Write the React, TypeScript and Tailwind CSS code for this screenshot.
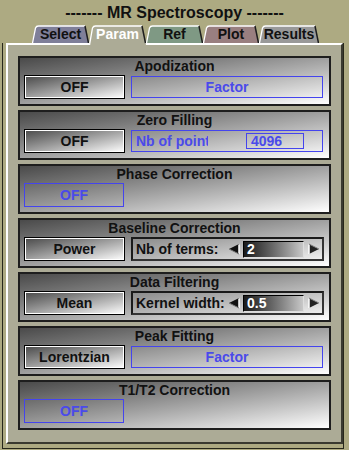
import type { ReactNode } from 'react'

const tabs = [
  { label: 'Select', w: 57, fill: '#7f7f99', text: 'text-[#111]' },
  { label: 'Param', w: 57, fill: '#acab96', text: 'text-white', active: true },
  { label: 'Ref', w: 57, fill: '#7f9984', text: 'text-[#111]' },
  { label: 'Plot', w: 56, fill: '#997f80', text: 'text-[#111]' },
  { label: 'Results', w: 60, fill: '#999999', text: 'text-[#111]' },
]

function Tab({ label, w, fill, text, active }: { label: string; w: number; fill: string; text: string; active?: boolean }) {
  const h = active ? 20 : 18
  return (
    <div className={`relative flex items-center justify-center ${active ? 'z-10 h-[20px] -mb-[2px] pb-[2px]' : 'h-[18px]'}`} style={{ width: w }}>
      <svg className="absolute inset-0" width={w} height={h}>
        <path d={`M0 ${h} L3 3 Q4 0.5 6.5 0.5 L${w - 4} 0.5 L${w} ${h} Z`} fill={fill} />
        <path d={`M0.5 ${h} L3.5 3 Q4.3 1 6.5 1 L${w - 4} 1`} stroke="#fff" strokeWidth="1.3" fill="none" />
        <path d={`M${w - 4} 1 L${w - 0.5} ${active ? h - 2 : h}`} stroke="#1e1e1e" strokeWidth="1.5" fill="none" />
      </svg>
      <span className={`relative font-bold text-[14px] leading-none ${text}`}>{label}</span>
    </div>
  )
}

function Section({ title, children }: { title: string; children: ReactNode }) {
  return (
    <div className="h-[50px] border-2 border-[#1e1e1e] bg-linear-to-br from-[#4a4a4a] to-white">
      <div className="text-center font-bold text-[14px] leading-[15px] mt-[1px] text-[#111]">{title}</div>
      <div className="flex items-center gap-[6px] px-[4px] mt-[1px] h-[24px]">{children}</div>
    </div>
  )
}

function Btn({ label }: { label: string }) {
  return (
    <div className="w-[101px] h-[24px] shrink-0 flex items-center justify-center border border-black shadow-[inset_0_0_0_1px_#fff] bg-linear-to-br from-[#4a4a4a] to-white font-bold text-[14px] text-[#111]">
      {label}
    </div>
  )
}

function OffBlue() {
  return (
    <div className="w-[100px] h-[24px] shrink-0 flex items-center justify-center border border-[#4444ee] font-bold text-[14px] text-[#4a4aea]">
      OFF
    </div>
  )
}

function Factor() {
  return (
    <div className="w-[192px] h-[22px] flex items-center justify-center border border-[#4444ee] font-bold text-[14px] text-[#4a4aea]">
      Factor
    </div>
  )
}

function Arrow({ left }: { left?: boolean }) {
  return (
    <svg width="12" height="12" viewBox="0 0 12 12" className="shrink-0">
      {left ? (
        <>
          <path d="M11 1 L1 6 L11 11 Z" fill="#111" />
          <path d="M11 1.5 L11 11" stroke="#fff" strokeWidth="1.5" />
          <path d="M1 6 L11 11" stroke="#777" strokeWidth="1" />
        </>
      ) : (
        <>
          <path d="M1 1 L11 6 L1 11 Z" fill="#222" />
          <path d="M1 1.5 L1 11" stroke="#fff" strokeWidth="1.5" />
          <path d="M1 1 L11 6" stroke="#888" strokeWidth="1" />
        </>
      )}
    </svg>
  )
}

function Spinner({ label, value }: { label: string; value: string }) {
  return (
    <div className="w-[193px] h-[24px] flex items-center border-2 border-t-[#1a1a1a] border-l-[#1a1a1a] border-r-[#333] border-b-[#333] pl-[3px] pr-[2px]">
      <span className="font-bold text-[14px] text-[#111] whitespace-nowrap">{label}</span>
      <div className="flex-1" />
      <Arrow left />
      <div className="ml-[3px] w-[61px] h-[17px] flex items-center pl-[3px] border border-t-black border-l-black border-r-[#ddd] border-b-[#ddd] bg-linear-to-r from-[#1a1a1a] to-[#c8c8c8] font-bold text-[14px] text-white">
        {value}
      </div>
      <div className="ml-[4px]">
        <Arrow />
      </div>
    </div>
  )
}

export default function App() {
  return (
    <div className="w-[349px] h-[450px] bg-[#adaa82] font-['Liberation_Sans',Arial,sans-serif] overflow-hidden">
      <div className="h-[25px] text-center font-bold text-[16px] leading-[26px] text-[#111] whitespace-nowrap">
        ------- MR Spectroscopy -------
      </div>
      <div className="flex items-end pl-[32px] h-[18px]">
        {tabs.map((t) => (
          <Tab key={t.label} {...t} />
        ))}
      </div>
      <div className="ml-[2px] mr-[5px] h-[406px] border-l border-r border-b border-[#26261a]">
        <div className="ml-[3px] h-[401px] border-2 border-t-white border-l-white border-r-[#3a3a30] border-b-[#3a3a30] bg-[#acab96] pt-[11px] px-[10px] flex flex-col gap-[4px]">
          <Section title="Apodization">
            <Btn label="OFF" />
            <Factor />
          </Section>
          <Section title="Zero Filling">
            <Btn label="OFF" />
            <div className="w-[192px] h-[22px] flex items-center border border-[#4444ee] pl-[4px]">
              <span className="w-[72px] shrink-0 overflow-hidden whitespace-nowrap font-bold text-[14px] text-[#4a4aea]">Nb of points</span>
              <div className="ml-[38px] w-[58px] h-[16px] flex items-center pl-[4px] border border-[#4444ee] font-bold text-[14px] text-[#4a4aea]">
                4096
              </div>
            </div>
          </Section>
          <Section title="Phase Correction">
            <OffBlue />
          </Section>
          <Section title="Baseline Correction">
            <Btn label="Power" />
            <Spinner label="Nb of terms:" value="2" />
          </Section>
          <Section title="Data Filtering">
            <Btn label="Mean" />
            <Spinner label="Kernel width:" value="0.5" />
          </Section>
          <Section title="Peak Fitting">
            <Btn label="Lorentzian" />
            <Factor />
          </Section>
          <Section title="T1/T2 Correction">
            <OffBlue />
          </Section>
        </div>
      </div>
    </div>
  )
}
